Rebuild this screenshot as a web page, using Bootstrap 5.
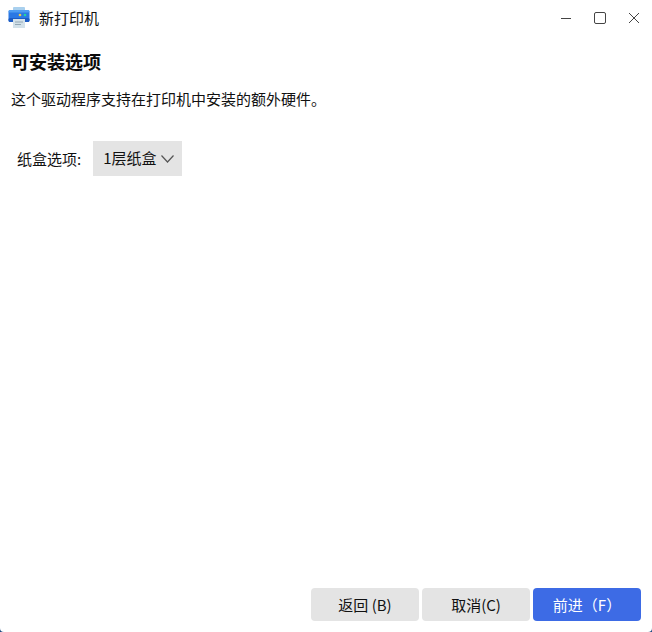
<!DOCTYPE html>
<html lang="zh">
<head>
<meta charset="utf-8">
<title>新打印机</title>
<link rel="stylesheet" href="https://cdn.jsdelivr.net/npm/bootstrap@5.3.0/dist/css/bootstrap.min.css">
<style>
html,body{height:100%;margin:0;}
body{background:#1c4a80;color:#111;font-family:"Noto Sans CJK SC","Noto Sans",sans-serif;font-size:15px;overflow:hidden;}
.wnd{width:652px;height:632px;background:#fff;border-radius:0 0 4px 4px;}
.titlebar{height:36px;padding-left:8px;padding-right:1px;}
.titletxt{font-size:15px;margin-left:9px;line-height:36px;}
.winbtn{width:34px;height:36px;display:flex;align-items:center;justify-content:center;}
.bodyarea{padding:12px 11px 0 11px;}
.headtxt{font-size:18px;font-weight:700;line-height:26px;margin:0;color:#0a0a0a;}
.desc{font-size:15px;line-height:22px;margin:14px 0 0 0;}
.optrow{margin-top:31px;padding-left:6px;}
.optlabel{line-height:35px;margin-right:12px;}
.combo{width:89px;height:35px;background:#e4e4e4;padding-left:10px;}
.footbar{padding:0 11px 11px 0;gap:3px;}
.fbtn{width:108px;height:33px;padding:0;border:0;border-radius:4px;background:#e4e4e4;color:#111;font-size:15px;line-height:33px;}
.fbtn.prim,.fbtn.prim:hover{background:#3d6be5;color:#fff;}
</style>
</head>
<body>
<div class="wnd d-flex flex-column">
  <div class="titlebar d-flex align-items-center">
    <svg width="22" height="22" viewBox="0 0 22 22">
      <rect x="5" y="0" width="12" height="5" rx="1" fill="#a9d0ee"/>
      <rect x="0.500" y="3" width="21" height="12" rx="2.500" fill="#2b78e4"/>
      <rect x="0.500" y="3" width="21" height="2.500" rx="1.250" fill="#4f9df2"/>
      <rect x="0.500" y="11" width="21" height="4" rx="1.500" fill="#1d5cc4"/>
      <circle cx="12" cy="8" r="1.300" fill="#f2c94c"/>
      <circle cx="17" cy="8" r="1.300" fill="#23d5a0"/>
      <rect x="5" y="12" width="12" height="9" fill="#d3e1e9"/>
      <rect x="7" y="14.500" width="8" height="1" fill="#93a8b5"/>
      <rect x="7" y="17" width="6" height="1" fill="#93a8b5"/>
    </svg>
    <span class="titletxt">新打印机</span>
    <div class="d-flex ms-auto">
      <span class="winbtn"><svg width="12" height="12" viewBox="0 0 12 12"><path d="M1 6.500h10" stroke="#444" fill="none"/></svg></span>
      <span class="winbtn"><svg width="12" height="12" viewBox="0 0 12 12"><rect x=".5" y=".5" width="11" height="11" rx="1.500" stroke="#444" fill="none"/></svg></span>
      <span class="winbtn"><svg width="12" height="12" viewBox="0 0 12 12"><path d="M1 1l10 10M11 1L1 11" stroke="#444" fill="none"/></svg></span>
    </div>
  </div>
  <div class="bodyarea flex-grow-1">
    <h1 class="headtxt">可安装选项</h1>
    <p class="desc">这个驱动程序支持在打印机中安装的额外硬件。</p>
    <div class="optrow d-flex align-items-center">
      <span class="optlabel">纸盒选项:</span>
      <div class="combo d-flex align-items-center">
        <span>1层纸盒</span>
        <svg class="ms-1" width="13" height="8" viewBox="0 0 13 8"><path d="M.5.5L6.500 7 12.500.5" stroke="#555" stroke-width="1.200" fill="none"/></svg>
      </div>
    </div>
  </div>
  <div class="footbar d-flex justify-content-end">
    <button class="btn fbtn" type="button">返回 (B)</button>
    <button class="btn fbtn" type="button">取消(C)</button>
    <button class="btn fbtn prim" type="button">前进（F）</button>
  </div>
</div>
<script src="https://cdn.jsdelivr.net/npm/bootstrap@5.3.0/dist/js/bootstrap.bundle.min.js"></script>
</body>
</html>
